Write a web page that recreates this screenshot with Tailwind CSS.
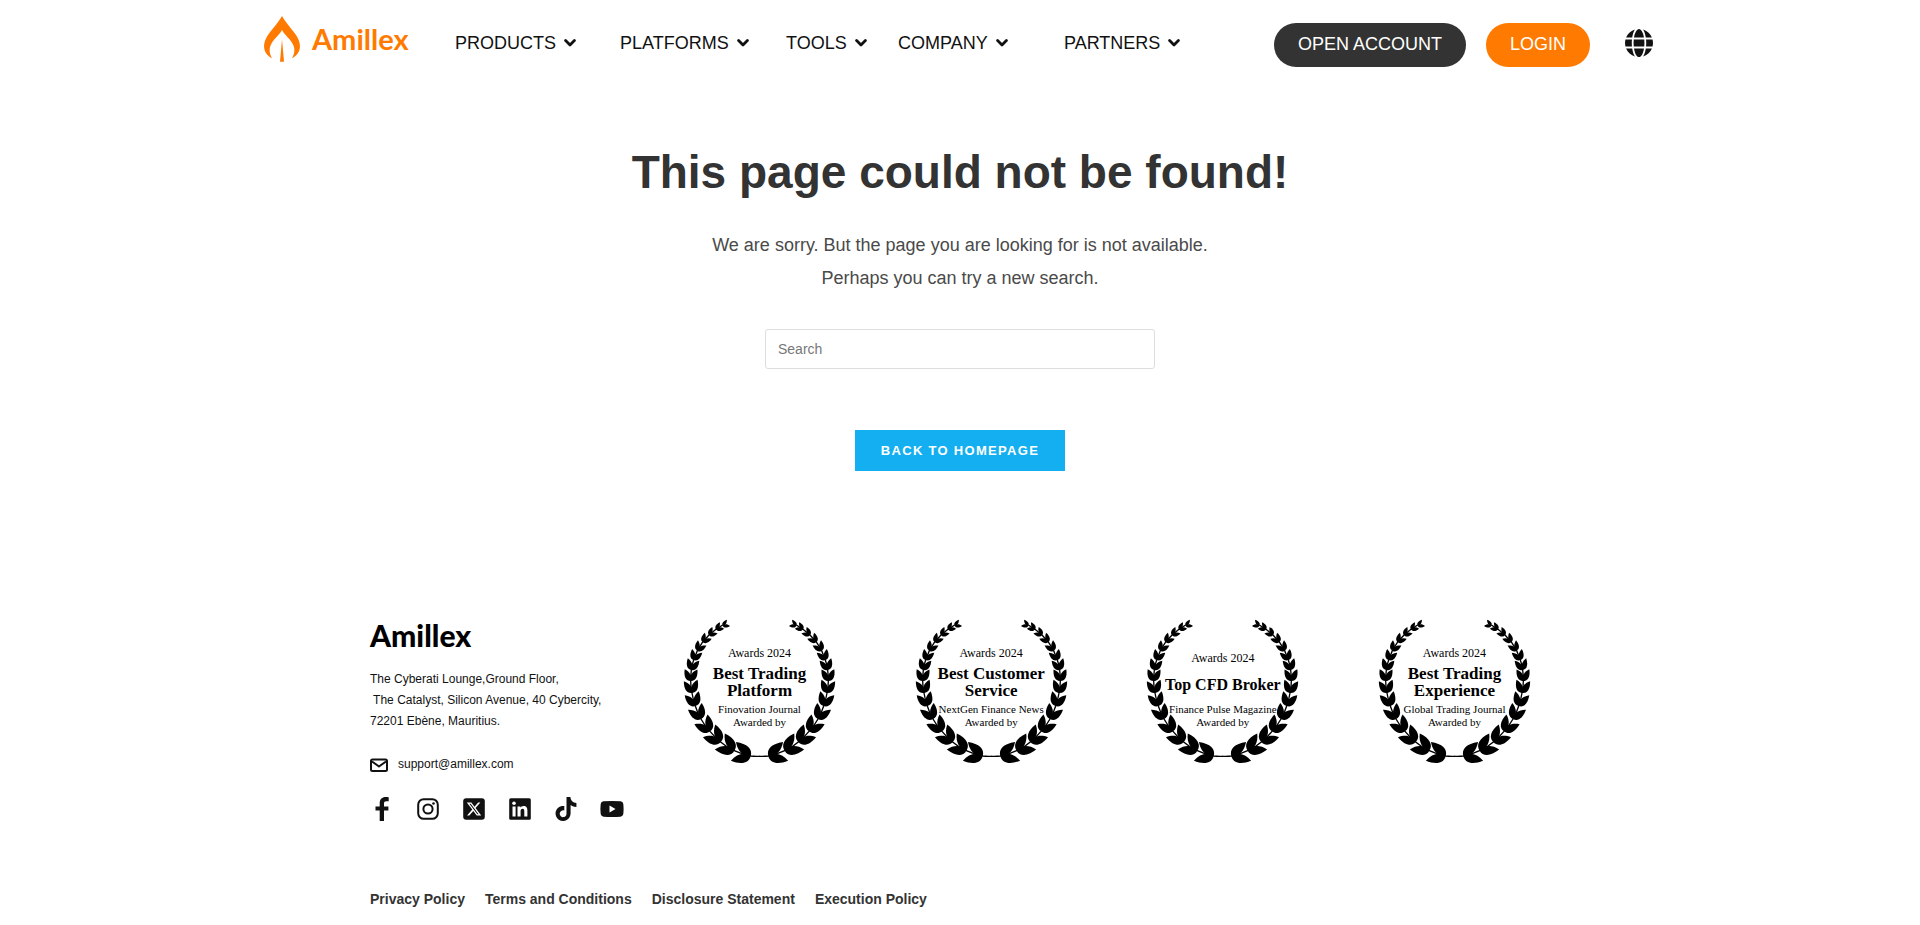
<!DOCTYPE html>
<html lang="en">
<head>
  <meta charset="UTF-8" />
  <meta name="viewport" content="width=device-width, initial-scale=1" />
  <title>Page not found - Amillex</title>
  <script src="https://cdn.jsdelivr.net/npm/@tailwindcss/browser@4"></script>
</head>
<body class="bg-white font-['Liberation_Sans',Arial,sans-serif] text-[#111]">
  <!-- Shared shapes -->
  <svg class="hidden" aria-hidden="true">
    <symbol id="chevron" viewBox="0 0 12 8">
      <path d="M1.6 1.6 6 6l4.4-4.4" fill="none" stroke="currentColor" stroke-width="2.8" stroke-linecap="round" stroke-linejoin="round" />
    </symbol>
    <g id="leaves">
      <path d="M0 0C-20-8-22-32-4-61C14-40 16-16 0 0Z" transform="rotate(-27)" />
      <path d="M0 0C20-8 22-32 4-61C-14-40-16-16 0 0Z" transform="rotate(23)" />
    </g>
    <g id="branch">
      <path d="M240 421Q225 422 212 420Q186 415 163 404Q140 394 122 378Q104 363 90 346Q74 329 63 309Q52 290 46 270Q39 250 36 231Q32 212 32 195Q32 178 34 162Q36 146 41 132L52 104L68 78L87 57L108 40L128 27" fill="none" stroke="currentColor" stroke-width="4" />
      <use href="#leaves" transform="translate(212 420) rotate(-73)" />
      <use href="#leaves" transform="translate(163 404) rotate(-56) scale(.96)" />
      <use href="#leaves" transform="translate(122 378) rotate(-44) scale(.9)" />
      <use href="#leaves" transform="translate(90 346) rotate(-35) scale(.84)" />
      <use href="#leaves" transform="translate(63 309) rotate(-24) scale(.78)" />
      <use href="#leaves" transform="translate(46 270) rotate(-14) scale(.74)" />
      <use href="#leaves" transform="translate(36 231) rotate(-4) scale(.7)" />
      <use href="#leaves" transform="translate(32 195) rotate(4) scale(.65)" />
      <use href="#leaves" transform="translate(34 162) rotate(14) scale(.6)" />
      <use href="#leaves" transform="translate(41 132) rotate(23) scale(.55)" />
      <use href="#leaves" transform="translate(52 104) rotate(34) scale(.51)" />
      <use href="#leaves" transform="translate(68 78) rotate(44) scale(.47)" />
      <use href="#leaves" transform="translate(87 57) rotate(53) scale(.43)" />
      <use href="#leaves" transform="translate(108 40) rotate(59) scale(.4)" />
      <use href="#leaves" transform="translate(128 29) rotate(66) scale(.36)" />
    </g>
    <symbol id="laurel" viewBox="12 15 453 423" class="overflow-visible">
      <use href="#branch" />
      <use href="#branch" transform="translate(477 0) scale(-1 1)" />
    </symbol>
  </svg>

  <header class="mx-auto flex h-[86px] max-w-[1400px] items-center pl-1">
    <a href="#" class="flex w-[191px] shrink-0 items-center gap-3 pb-2 text-[#ff7a00]" aria-label="Amillex">
      <svg class="h-[46px] w-9" viewBox="0 0 108 138" fill="currentColor">
        <path d="M54 0C68 24 88 44 98 60C116 90 108 114 84 127C92 112 94 98 86 84C80 70 64 60 54 42C44 60 28 70 22 84C14 98 16 112 24 127C0 114-8 90 10 60C20 44 40 24 54 0Z" />
        <path d="M54 70 60 137H48Z" />
      </svg>
      <span class="font-[Lato,sans-serif] text-[29px] leading-9 font-bold">Amillex</span>
    </a>
    <nav class="grid grid-cols-[165px_166px_112px_166px_auto] text-[18px] leading-6">
      <a href="#" class="flex items-center gap-2">PRODUCTS <svg class="h-2 w-3"><use href="#chevron" /></svg></a>
      <a href="#" class="flex items-center gap-2">PLATFORMS <svg class="h-2 w-3"><use href="#chevron" /></svg></a>
      <a href="#" class="flex items-center gap-2">TOOLS <svg class="h-2 w-3"><use href="#chevron" /></svg></a>
      <a href="#" class="flex items-center gap-2">COMPANY <svg class="h-2 w-3"><use href="#chevron" /></svg></a>
      <a href="#" class="flex items-center gap-2">PARTNERS <svg class="h-2 w-3"><use href="#chevron" /></svg></a>
    </nav>
    <div class="mr-[7px] ml-auto flex items-center text-[18px] text-white">
      <a href="#" class="mt-1 rounded-full bg-[#333] px-6 pt-[9px] pb-[11px] leading-6">OPEN ACCOUNT</a>
      <a href="#" class="mt-1 ml-5 rounded-full bg-[#ff7a00] px-6 pt-[9px] pb-[11px] leading-6">LOGIN</a>
      <button type="button" class="ml-[35px] text-[#111]" aria-label="Language">
        <svg class="h-7 w-7" viewBox="0 8 496 496" fill="currentColor"><path d="M336.500 160C322 70.700 287.800 8 248 8s-74 62.700-88.500 152h177zM152 256c0 22.200 1.200 43.500 3.300 64h185.300c2.100-20.500 3.300-41.800 3.300-64s-1.200-43.500-3.300-64H155.300c-2.100 20.500-3.300 41.800-3.300 64zm324.700-96c-28.600-67.900-86.500-120.400-158-141.600 24.400 33.800 41.200 84.700 50 141.600h108zM177.200 18.400C105.800 39.600 47.800 92.100 19.300 160h108c8.700-56.900 25.500-107.800 49.900-141.600zM487.400 192H372.700c2.100 21 3.300 42.500 3.300 64s-1.200 43-3.300 64h114.600c5.500-20.500 8.600-41.800 8.600-64s-3.100-43.500-8.500-64zM120 256c0-21.500 1.200-43 3.300-64H8.600C3.200 212.500 0 233.800 0 256s3.200 43.500 8.600 64h114.600c-2-21-3.200-42.500-3.200-64zm39.500 96c14.500 89.300 48.700 152 88.500 152s74-62.700 88.500-152h-177zm159.300 141.600c71.400-21.200 129.400-73.700 158-141.600h-108c-8.800 56.900-25.600 107.800-50 141.600zM19.300 352c28.600 67.900 86.500 120.400 158 141.600-24.400-33.800-41.200-84.700-50-141.600h-108z" /></svg>
      </button>
    </div>
  </header>

  <main class="flex flex-col items-center px-4 pt-[58px] text-center">
    <h1 class="text-[46px] leading-[56px] font-bold text-[#333]">This page could not be found!</h1>
    <p class="mt-[29px] text-[18px] leading-[33px] text-[#4a4a4a]">We are sorry. But the page you are looking for is not available.<br />Perhaps you can try a new search.</p>
    <form class="mt-[34px] w-full max-w-[390px]" role="search">
      <input type="search" aria-label="Search" placeholder="Search" class="block h-10 w-full rounded-[3px] border border-[#ddd] px-3 text-[14px] text-[#333] placeholder:text-[#777]" />
    </form>
    <a href="#" class="mt-[61px] bg-[#13aff0] px-[26px] py-[10px] text-[13px] leading-[21px] font-bold tracking-widest text-white">BACK TO HOMEPAGE</a>
  </main>

  <footer class="mx-auto mt-[150px] max-w-[1180px]">
    <div class="flex items-start pr-5">
      <div class="w-[314px] shrink-0">
        <div class="font-[Lato,sans-serif] text-[30px] leading-7 font-black text-black">Amillex</div>
        <address class="mt-5 text-[12px] leading-[21px] whitespace-pre not-italic">The Cyberati Lounge,Ground Floor,
 The Catalyst, Silicon Avenue, 40 Cybercity,
72201 Ebène, Mauritius.</address>
        <a href="mailto:support@amillex.com" class="mt-[22px] flex items-center gap-[10px] text-[12px] leading-[21px]">
          <svg class="h-[14px] w-[18px]" viewBox="0 0 18 14" fill="none" stroke="currentColor" stroke-width="2" stroke-linejoin="round">
            <rect x="1" y="1.500" width="16" height="11.500" rx="1.500" />
            <path d="M2 3.500 9 8.500 16 3.500" />
          </svg>
          support@amillex.com
        </a>
        <div class="mt-[22px] flex gap-[22px]">
          <a href="#" aria-label="Facebook">
            <svg class="h-6 w-6" viewBox="0 0 24 24" fill="currentColor"><path d="M9.700 24V13.500H5.500V9.500h4.200V6.500C9.700 2.300 11.800 0 15.800 0c1 0 2 .1 2.900.2v4h-2.200c-1.900 0-2.500.9-2.500 2.300v3h4.400v4H14V24Z" /></svg>
          </a>
          <a href="#" aria-label="Instagram">
            <svg class="h-6 w-6" viewBox="0 0 24 24" fill="none" stroke="currentColor" stroke-width="2"><rect x="2.200" y="2.200" width="19.600" height="19.600" rx="5.500" /><circle cx="12" cy="12" r="4.600" /><circle cx="17.500" cy="6.500" r="1.300" fill="currentColor" stroke="none" /></svg>
          </a>
          <a href="#" aria-label="X">
            <svg class="h-6 w-6" viewBox="0 0 24 24" fill="currentColor"><rect x="1.200" y="1.200" width="21.600" height="21.600" rx="3" /><path fill="#fff" transform="translate(4.800 4.800) scale(.6)" d="M18.901 1.153h3.680l-8.040 9.190L24 22.846h-7.406l-5.800-7.584-6.638 7.584H.474l8.600-9.830L0 1.154h7.594l5.243 6.932ZM17.610 20.644h2.039L6.486 3.240H4.298Z" /></svg>
          </a>
          <a href="#" aria-label="LinkedIn">
            <svg class="h-6 w-6" viewBox="0 0 24 24" fill="currentColor"><rect x="1.200" y="1.200" width="21.600" height="21.600" rx="1.500" /><g fill="#fff"><circle cx="6" cy="6.200" r="1.800" /><path d="M4.500 9.400h3.100v10H4.500zM9.500 9.400h2.900v1.400c.5-.9 1.500-1.700 3.100-1.700 3 0 3.900 1.900 3.900 4.700v5.600h-3.100v-5c0-1.300-.2-2.700-1.700-2.700s-2 1.200-2 2.600v5.100H9.500z" /></g></svg>
          </a>
          <a href="#" aria-label="TikTok">
            <svg class="h-6 w-6" viewBox="0 0 24 24" fill="currentColor"><path d="M12.525.02c1.310-.02 2.610-.01 3.910-.02.08 1.530.63 3.090 1.750 4.170 1.120 1.110 2.700 1.620 4.240 1.790v4.030c-1.440-.05-2.890-.35-4.200-.97-.57-.26-1.100-.59-1.620-.93-.01 2.920.01 5.840-.02 8.750-.08 1.400-.54 2.790-1.350 3.940-1.310 1.920-3.580 3.170-5.910 3.210-1.430.08-2.860-.31-4.080-1.030-2.020-1.190-3.440-3.370-3.650-5.710-.02-.5-.03-1-.01-1.490.18-1.900 1.120-3.720 2.580-4.960 1.660-1.440 3.980-2.130 6.150-1.720.02 1.480-.04 2.960-.04 4.440-.99-.32-2.150-.23-3.020.37-.63.41-1.110 1.040-1.360 1.750-.21.51-.15 1.070-.14 1.610.24 1.640 1.820 3.020 3.500 2.870 1.120-.01 2.190-.66 2.770-1.610.19-.33.4-.67.41-1.060.1-1.790.06-3.570.07-5.360.01-4.030-.01-8.050.02-12.070z" /></svg>
          </a>
          <a href="#" aria-label="YouTube">
            <svg class="h-6 w-6" viewBox="0 0 24 24" fill="currentColor"><path d="M3.500 4.300Q12 3.600 20.500 4.300 23 4.600 23.300 7 23.900 12 23.300 17 23 19.400 20.500 19.700 12 20.400 3.500 19.700 1 19.400.7 17 .1 12 .7 7 1 4.600 3.500 4.300Z" /><path fill="#fff" d="M9.500 8.500v7l6-3.500z" /></svg>
          </a>
        </div>
      </div>

      <div class="flex flex-1 justify-between text-center font-['Liberation_Serif',serif] text-black">
        <div class="relative flex h-[141px] w-[151px] flex-col items-center pt-6 whitespace-nowrap">
          <svg class="absolute inset-0 h-full w-full overflow-visible"><use href="#laurel" /></svg>
          <p class="text-[12px] leading-4">Awards 2024</p>
          <h2 class="mt-1 text-[17px] leading-[17px] font-bold">Best Trading<br />Platform</h2>
          <p class="mt-1 text-[11px] leading-[13px]">Finovation Journal<br />Awarded by</p>
        </div>
        <div class="relative flex h-[141px] w-[151px] flex-col items-center pt-6 whitespace-nowrap">
          <svg class="absolute inset-0 h-full w-full overflow-visible"><use href="#laurel" /></svg>
          <p class="text-[12px] leading-4">Awards 2024</p>
          <h2 class="mt-1 text-[17px] leading-[17px] font-bold">Best Customer<br />Service</h2>
          <p class="mt-1 text-[11px] leading-[13px]">NextGen Finance News<br />Awarded by</p>
        </div>
        <div class="relative flex h-[141px] w-[151px] flex-col items-center pt-[29px] whitespace-nowrap">
          <svg class="absolute inset-0 h-full w-full overflow-visible"><use href="#laurel" /></svg>
          <p class="text-[12px] leading-4">Awards 2024</p>
          <h2 class="mt-[10px] text-[16px] leading-[17px] font-bold">Top CFD Broker</h2>
          <p class="mt-[10px] text-[11px] leading-[13px]">Finance Pulse Magazine<br />Awarded by</p>
        </div>
        <div class="relative flex h-[141px] w-[151px] flex-col items-center pt-6 whitespace-nowrap">
          <svg class="absolute inset-0 h-full w-full overflow-visible"><use href="#laurel" /></svg>
          <p class="text-[12px] leading-4">Awards 2024</p>
          <h2 class="mt-1 text-[17px] leading-[17px] font-bold">Best Trading<br />Experience</h2>
          <p class="mt-1 text-[11px] leading-[13px]">Global Trading Journal<br />Awarded by</p>
        </div>
      </div>
    </div>

    <nav class="mt-[68px] flex gap-5 pb-3 text-[14px] leading-5 font-bold text-[#333]">
      <a href="#">Privacy Policy</a>
      <a href="#">Terms and Conditions</a>
      <a href="#">Disclosure Statement</a>
      <a href="#">Execution Policy</a>
    </nav>
  </footer>
</body>
</html>
